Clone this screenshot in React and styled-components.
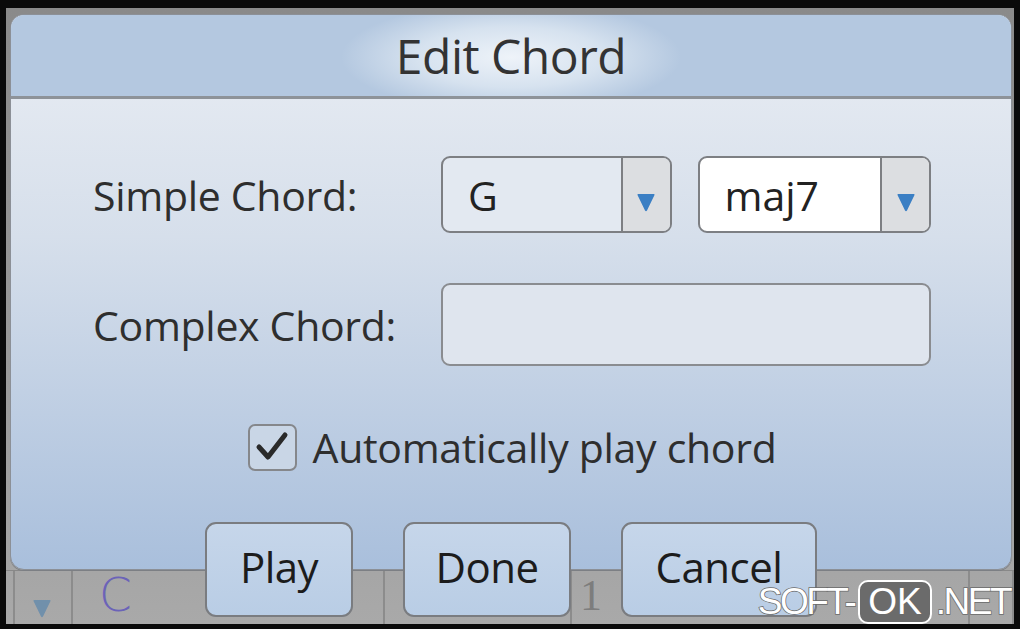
import React, { useState } from 'react';
import styled, { createGlobalStyle } from 'styled-components';

const GlobalStyle = createGlobalStyle`
    html, body {
        margin: 0;
        padding: 0;
        background: #000;
    }
    body {
        font-family: "Open Sans", "Noto Sans", sans-serif;
    }
`;

const Frame = styled.div`
    width: 1020px;
    height: 629px;
    box-sizing: border-box;
    padding: 8px 6px 5px 6px;
    background: #0a0a0a;
    position: relative;
    overflow: hidden;
`;

const Screen = styled.div`
    height: 100%;
    display: flex;
    flex-direction: column;
    background: linear-gradient(#8a8a8a, #9a9a9a 60%, #a9a9a9);
`;

const Dialog = styled.div`
    margin: 6px 2px 0 4px;
    height: 556px;
    box-sizing: border-box;
    border-radius: 14px;
    border: 1px solid #8c9097;
    background: linear-gradient(#eaeef4 0%, #d6dfeb 40%, #a9bfdc 100%);
    display: flex;
    flex-direction: column;
    position: relative;
    z-index: 2;
    box-shadow: 0 1px 0 #7c7f84;
`;

const TitleBar = styled.div`
    height: 81px;
    border-radius: 13px 13px 0 0;
    border-bottom: 3px solid #8e9399;
    background: radial-gradient(ellipse 170px 55px at 50% 52%, #eef3f9 0%, #d6e2ef 55%, rgba(181, 201, 224, 0) 100%), #b4c8e0;
    display: flex;
    align-items: center;
    justify-content: center;
    color: #333;
    font-size: 48px;
    letter-spacing: -0.5px;
`;

const Body = styled.div`
    flex: 1;
    display: flex;
    flex-direction: column;
    padding: 57px 80px 0 82px;
`;

const FormRow = styled.div`
    display: flex;
    align-items: center;
    margin-bottom: ${p => p.gap}px;
`;

const Label = styled.div`
    width: 348px;
    flex: none;
    color: #2e2e2e;
    font-size: 41px;
    letter-spacing: -0.3px;
`;

const Combo = styled.div`
    width: ${p => p.w}px;
    height: 77px;
    box-sizing: border-box;
    border: 2px solid #7d7f83;
    border-radius: 9px;
    background: ${p => p.bg};
    display: flex;
    overflow: hidden;
    margin-right: ${p => p.mr || 0}px;
`;

const ComboValue = styled.div`
    flex: 1;
    display: flex;
    align-items: center;
    padding-left: 25px;
    font-size: 41px;
    color: #222;
`;

const ComboArrow = styled.div`
    width: 49px;
    border-left: 2px solid #7d7f83;
    background: #dcdee1;
    display: flex;
    align-items: center;
    justify-content: center;
    padding-top: 16px;
    box-sizing: border-box;
`;

const TextBox = styled.div`
    width: 491px;
    height: 83px;
    box-sizing: border-box;
    border: 2px solid #8a8c90;
    border-radius: 9px;
    background: #dfe5ee;
`;

const CheckRow = styled.label`
    display: flex;
    align-items: center;
    justify-content: center;
    gap: 16px;
    color: #2e2e2e;
    font-size: 41px;
    letter-spacing: -0.3px;
`;

const CheckBox = styled.span`
    width: 49px;
    height: 47px;
    box-sizing: border-box;
    border: 2px solid #85878b;
    border-radius: 7px;
    display: flex;
    align-items: center;
    justify-content: center;
    background: #c9d6e6;
`;

const ButtonRow = styled.div`
    margin-top: auto;
    margin-bottom: -48px;
    display: flex;
    justify-content: center;
    gap: 50px;
    position: relative;
    z-index: 3;
`;

const Button = styled.button`
    width: ${p => p.w}px;
    height: 95px;
    box-sizing: border-box;
    border: 2px solid #7a7c80;
    border-radius: 11px;
    background: linear-gradient(#c6d6ea, #b9cde5);
    font-family: "Open Sans", "Noto Sans", sans-serif;
    font-size: 42px;
    color: #1c1c1c;
    padding: 0 0 6px;
    letter-spacing: -0.5px;
`;

const Strip = styled.div`
    flex: 1;
    display: flex;
    border-top: 1px solid #888;
`;

const Cell = styled.div`
    width: ${p => p.w}px;
    flex: ${p => (p.w ? 'none' : '1')};
    border-right: 2px solid #8c8c8c;
    display: flex;
    align-items: flex-end;
    padding-left: ${p => p.pl || 0}px;
    box-sizing: border-box;
`;

const CellC = styled.span`
    color: #6b63b8;
    font-family: "DejaVu Sans", sans-serif;
    font-weight: 200;
    font-size: 47px;
    line-height: 1;
    margin-bottom: 6px;
`;

const CellNum = styled.span`
    color: #7d7d7d;
    font-family: "Liberation Serif", serif;
    font-size: 44px;
    line-height: 1;
    margin-bottom: 6px;
`;

const StripArrow = styled.span`
    margin-bottom: 6px;
    display: flex;
`;

const Watermark = styled.div`
    position: absolute;
    right: 10px;
    bottom: 5px;
    display: flex;
    align-items: center;
    font-family: "Liberation Sans", sans-serif;
    font-size: 37px;
    color: #fff;
    letter-spacing: -2.5px;
    -webkit-text-stroke: 1.5px #6a6a6a;
    paint-order: stroke fill;
    z-index: 5;
`;

const WatermarkBox = styled.span`
    background: #6b6b6b;
    border: 2px solid #fff;
    border-radius: 10px;
    padding: 0 8px;
    margin: 0 4px 0 4px;
    -webkit-text-stroke: 0;
    line-height: 40px;
    letter-spacing: 0;
`;

const Arrow = ({ color = '#3b7fc4', w = 20, h = 19 }) => (
    <svg width={w} height={h} viewBox="0 0 20 19">
        <path d="M1.5 2 Q1 1 2.5 1 L17.5 1 Q19 1 18.5 2 L11 17.5 Q10 19 9 17.5 Z" fill={color} />
    </svg>
);

const Check = () => (
    <svg width="34" height="32" viewBox="0 0 34 32">
        <path d="M4 16 L13 26 L30 4" fill="none" stroke="#2a2a2a" strokeWidth="5" strokeLinecap="round" strokeLinejoin="round" />
    </svg>
);

export default function App() {
    const [autoPlay] = useState(true);

    return (
        <Frame>
            <GlobalStyle />
            <Screen>
                <Dialog>
                    <TitleBar>Edit Chord</TitleBar>
                    <Body>
                        <FormRow gap={50}>
                            <Label>Simple Chord:</Label>
                            <Combo w={232} bg="#e3e9f1" mr={26}>
                                <ComboValue>G</ComboValue>
                                <ComboArrow><Arrow /></ComboArrow>
                            </Combo>
                            <Combo w={235} bg="#ffffff">
                                <ComboValue>maj7</ComboValue>
                                <ComboArrow><Arrow /></ComboArrow>
                            </Combo>
                        </FormRow>
                        <FormRow gap={53}>
                            <Label>Complex Chord:</Label>
                            <TextBox />
                        </FormRow>
                        <CheckRow>
                            <CheckBox>{autoPlay && <Check />}</CheckBox>
                            Automatically play chord
                        </CheckRow>
                    </Body>
                    <ButtonRow>
                        <Button w={148}>Play</Button>
                        <Button w={168}>Done</Button>
                        <Button w={196}>Cancel</Button>
                    </ButtonRow>
                </Dialog>
                <Strip>
                    <Cell w={9} />
                    <Cell w={58} pl={17}>
                        <StripArrow><Arrow color="#7190ab" /></StripArrow>
                    </Cell>
                    <Cell w={312} pl={26}><CellC>C</CellC></Cell>
                    <Cell w={187} />
                    <Cell w={398} pl={8}><CellNum>1</CellNum></Cell>
                    <Cell />
                </Strip>
            </Screen>
            <Watermark>
                SOFT-<WatermarkBox>OK</WatermarkBox>.NET
            </Watermark>
        </Frame>
    );
}
